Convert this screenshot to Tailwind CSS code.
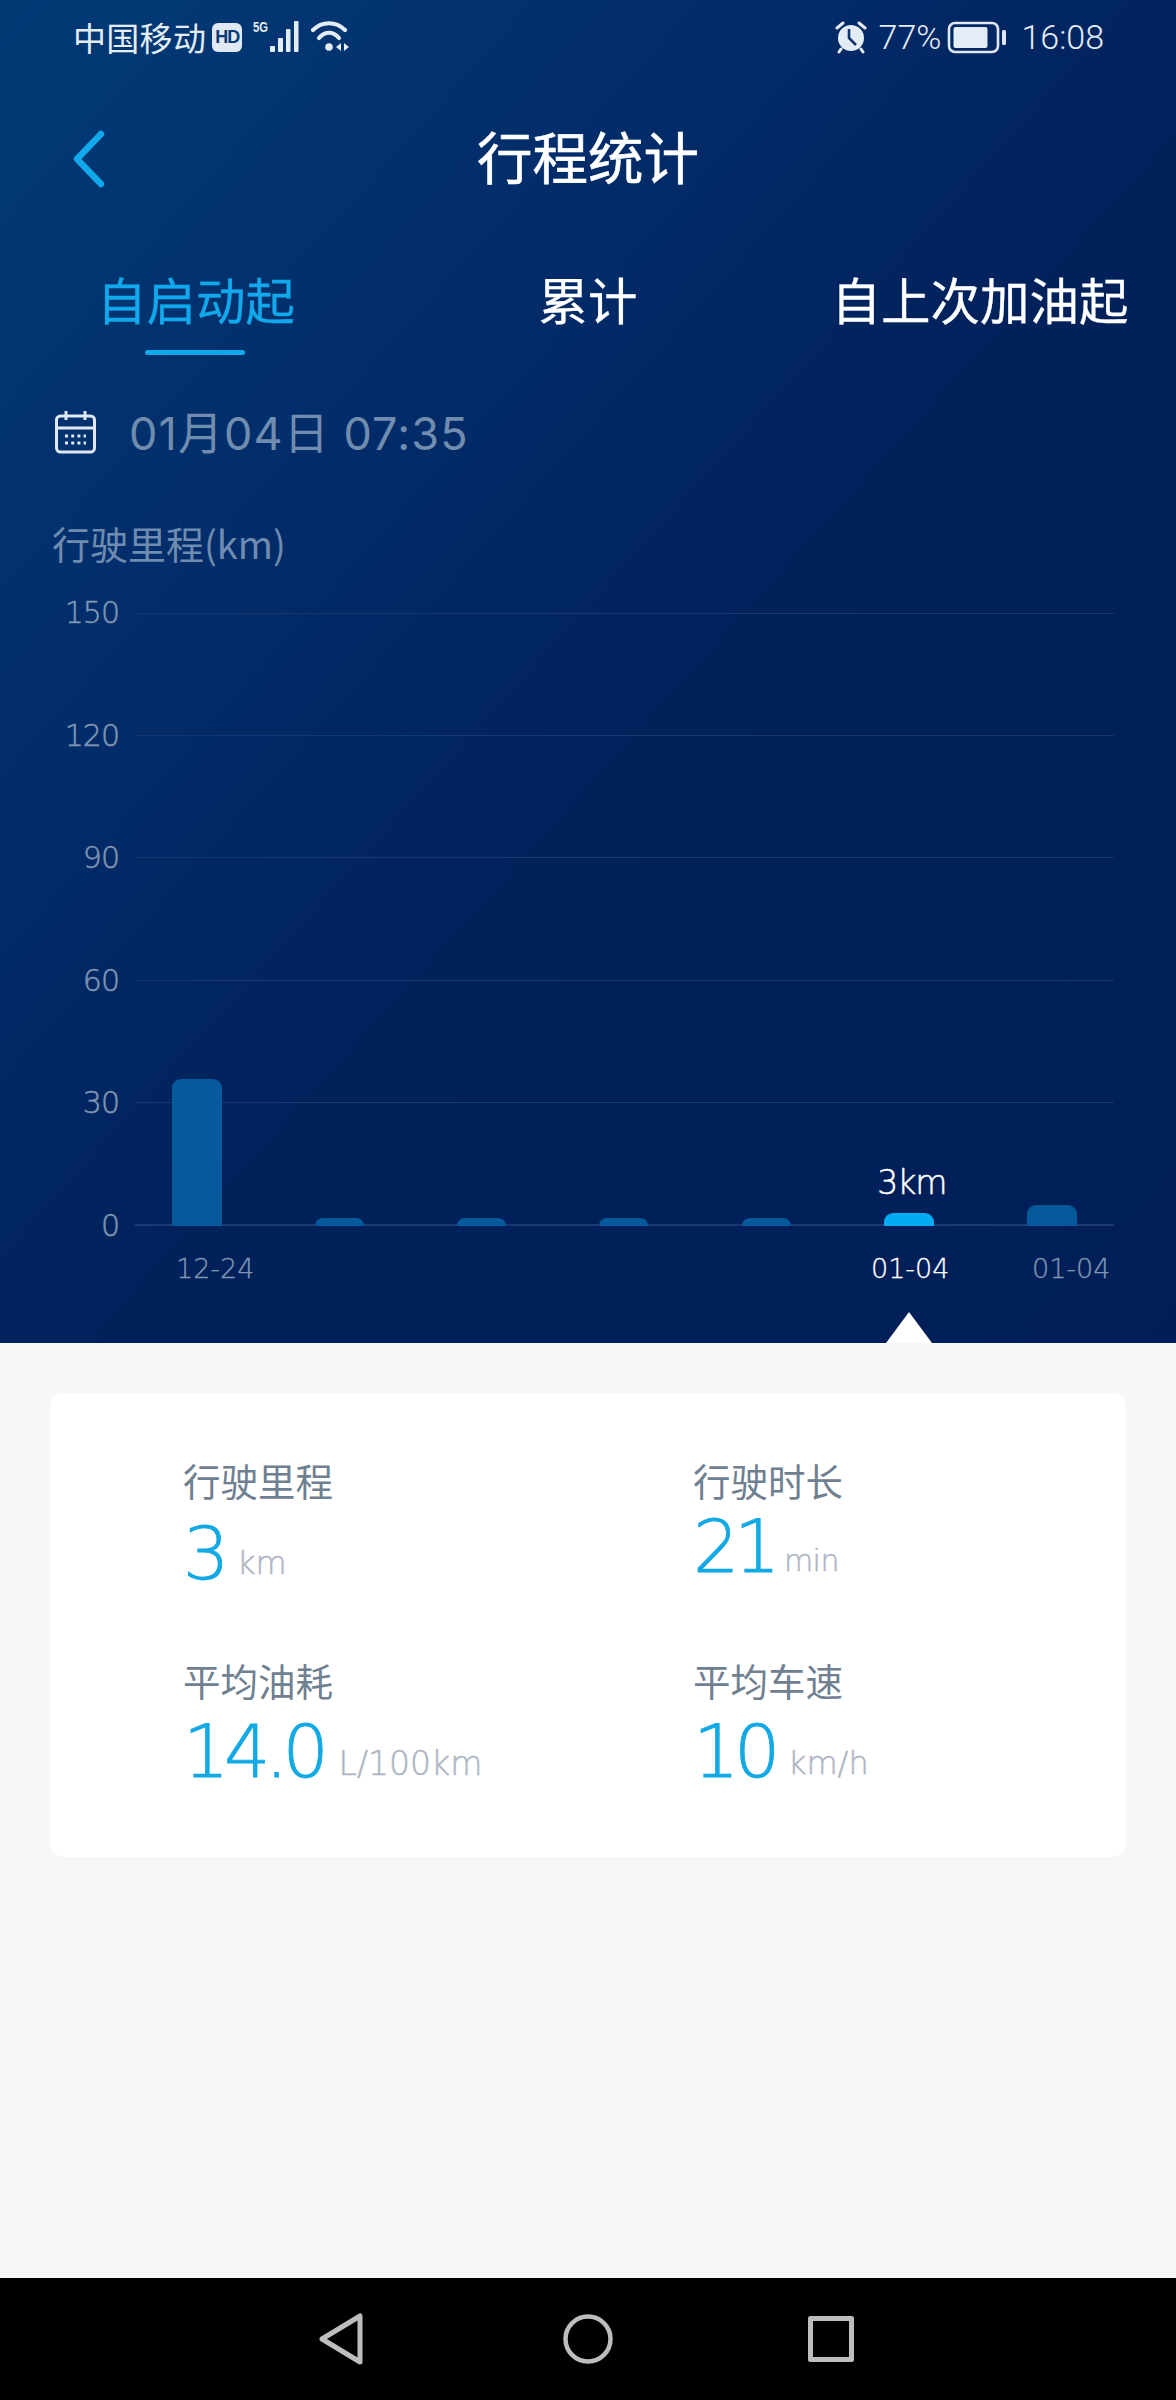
<!DOCTYPE html>
<html lang="zh-CN">
<head>
<meta charset="utf-8">
<script src="https://cdn.jsdelivr.net/npm/@tailwindcss/browser@4"></script>
</head>
<body class="m-0 bg-[#f5f7f9]">
<div class="flex h-[2400px] w-[1176px] flex-col overflow-hidden font-['Noto_Sans_CJK_SC','Noto_Sans',sans-serif]">
  <!-- dark panel -->
  <section class="relative h-[1343px] shrink-0 bg-[linear-gradient(132deg,#013b76_0%,#022d6a_30%,#01215b_55%,#001f58_100%)] text-white">
    <!-- status bar -->
    <div class="flex h-[74px] items-center justify-between pl-[73px] pr-[72px] text-[#e4ecf5]">
      <div class="flex items-center">
        <span class="text-[33px] leading-[44px] tracking-[0.3px]">中国移动</span>
        <span class="ml-[6px] flex h-[29px] w-[30px] items-center justify-center rounded-[6px] bg-[#dfe8f3] font-['Liberation_Sans',sans-serif] text-[18px] font-bold leading-none tracking-[-1px] text-[#0a3a72]">HD</span>
        <svg class="ml-[11px]" width="50" height="34" viewBox="0 0 50 34" fill="#e4ecf5">
          <text x="0" y="12" font-family="Liberation Sans" font-size="14" font-weight="700" textLength="15" lengthAdjust="spacingAndGlyphs">5G</text>
          <rect x="17" y="26" width="5" height="6" rx="1"/><rect x="25" y="18" width="5" height="14" rx="1"/><rect x="33" y="9" width="4.500" height="23" rx="1"/><rect x="41" y="1" width="4.500" height="31" rx="1"/>
        </svg>
        <svg class="ml-[8px]" width="40" height="34" viewBox="0 0 40 34" fill="none" stroke="#e4ecf5" stroke-width="4.200" stroke-linecap="round">
          <path d="M2 10 C 11 1, 25 1, 34 10"/><path d="M8 18 C 14 11, 22 11, 28 18"/>
          <circle cx="18" cy="27" r="3.800" fill="#e4ecf5" stroke="none"/>
          <path d="M25 27 L30 23 V31 Z M33 23 L38 27 L33 31 Z" fill="#e4ecf5" stroke="none"/>
        </svg>
      </div>
      <div class="flex items-center">
        <svg width="34" height="34" viewBox="0 0 34 34">
          <circle cx="17" cy="18" r="13" fill="#e4ecf5"/>
          <path d="M3 8 L9 3 M31 8 L25 3 M7 29 L5 32 M27 29 L29 32" stroke="#e4ecf5" stroke-width="3" stroke-linecap="round"/>
          <path d="M15 9 V18 L22 25" fill="none" stroke="#0c3470" stroke-width="2.6"/>
        </svg>
        <span class="ml-[11px] font-['Roboto',sans-serif] text-[34px] font-light leading-none">77%</span>
        <svg class="ml-[6px]" width="60" height="34" viewBox="0 0 60 34">
          <rect x="2" y="3" width="49" height="29" rx="6" fill="none" stroke="#dfe8f3" stroke-width="2.6"/>
          <rect x="6.500" y="7" width="34" height="21" rx="2" fill="#e4ecf5"/>
          <rect x="55" y="10" width="4" height="15" rx="1.500" fill="#dfe8f3"/>
        </svg>
        <span class="ml-[14px] font-['Roboto',sans-serif] text-[34px] font-light leading-none">16:08</span>
      </div>
    </div>
    <!-- header -->
    <header class="relative flex h-[168px] items-center justify-center pb-[5px]">
      <svg class="absolute left-[71px] top-[56px]" width="36" height="58" viewBox="0 0 36 58" fill="none" stroke="#11a8ec" stroke-width="6.500" stroke-linecap="round" stroke-linejoin="round"><path d="M30 4 L6 29 L30 54"/></svg>
      <h1 class="text-[55.500px] font-normal leading-none [-webkit-text-stroke:0.6px]">行程统计</h1>
    </header>
    <!-- tabs -->
    <nav class="grid h-[113px] grid-cols-3 text-center text-[49.500px] leading-none [-webkit-text-stroke:0.3px]">
      <div class="pt-[32px] text-[#12a8ec]">自启动起<div class="mx-auto mt-[26px] h-[5px] w-[100px] -translate-x-px rounded-full bg-[#12a8ec]"></div></div>
      <div class="pt-[32px]">累计</div>
      <div class="pt-[32px]">自上次加油起</div>
    </nav>
    <!-- date -->
    <div class="mt-[55px] flex h-[46px] items-center pl-[54px]">
      <svg class="-mt-[2px]" width="44" height="46" viewBox="0 0 44 46" fill="none" stroke="#dfe8f3" stroke-width="3">
        <rect x="2.500" y="7" width="38" height="36" rx="4"/>
        <path d="M2.500 19 H40.500 M12 2 V11 M31 2 V11" />
        <path d="M11 27 H32 M11 34 H32" stroke-dasharray="3 3.200" stroke-width="2.800"/>
      </svg>
      <span class="ml-[31px] font-['Inter','Noto_Sans_CJK_SC',sans-serif] text-[45px] leading-none tracking-[1.100px] text-[#708cae]">01月04日 07:35</span>
    </div>
    <!-- chart title -->
    <div class="mt-[65px] pl-[52px] font-['Noto_Sans_CJK_SC',sans-serif] text-[38px] leading-[44px] text-[#6f8cb0]">行驶里程(km)</div>
    <!-- chart -->
    <div class="mt-[48px] flex h-[613px] pl-[62px] pr-[62px]">
      <div class="flex w-[57px] flex-col justify-between font-['DejaVu_Sans',sans-serif] text-[30px] font-extralight tracking-[-1px] text-[#8196b2] [-webkit-text-stroke:0.5px] [&>span]:block [&>span]:h-0 [&>span]:text-right [&>span]:leading-[0]">
        <span>150</span><span>120</span><span>90</span><span>60</span><span>30</span><span>0</span>
      </div>
      <div class="relative ml-[16px] flex-1">
        <div class="absolute inset-0 flex flex-col justify-between [&>div]:h-px [&>div]:bg-[#17376e]">
          <div></div><div></div><div></div><div></div><div></div><div class="!h-[2px] !bg-[#1b3a74]"></div>
        </div>
        <div class="absolute bottom-0 left-[37px] right-[37px] flex items-end justify-between">
          <div class="h-[147px] w-[50px] rounded-t-[9px] bg-[#065a9c]"></div>
          <div class="h-[8px] w-[49px] rounded-t-[9px] bg-[#065a9c]"></div>
          <div class="h-[8px] w-[49px] rounded-t-[9px] bg-[#065a9c]"></div>
          <div class="h-[8px] w-[49px] rounded-t-[9px] bg-[#065a9c]"></div>
          <div class="h-[8px] w-[49px] rounded-t-[9px] bg-[#065a9c]"></div>
          <div class="relative h-[13px] w-[50px] rounded-t-[9px] bg-[#03abf3]">
            <span class="absolute bottom-[23px] left-[calc(50%+3px)] -translate-x-1/2 font-['DejaVu_Sans',sans-serif] text-[33px] font-extralight leading-[40px] tracking-[-1px] text-white [-webkit-text-stroke:0.5px]">3km</span>
          </div>
          <div class="h-[21px] w-[50px] rounded-t-[9px] bg-[#065a9c]"></div>
        </div>
      </div>
    </div>
    <!-- x labels -->
    <div class="relative mt-[25px] h-[36px] font-['DejaVu_Sans',sans-serif] text-[27px] font-extralight leading-[36px] text-[#8196b2] [-webkit-text-stroke:0.3px]">
      <span class="absolute left-[176px]">12-24</span>
      <span class="absolute left-[871px] text-white">01-04</span>
      <span class="absolute left-[1032px]">01-04</span>
    </div>
    <!-- pointer -->
    <div class="absolute bottom-0 left-[886px] h-[31px] w-[46px] bg-white [clip-path:polygon(50%_0,100%_100%,0_100%)]"></div>
  </section>

  <!-- body -->
  <main class="flex-1 bg-[#f5f7f9] px-[50px] pt-[50px]">
    <div class="grid h-[464px] grid-cols-[510px_1fr] content-start rounded-[14px] bg-white pl-[133px] pt-[58px]">
      <div class="h-[200px]">
        <div class="text-[37.500px] leading-[58px] text-[#6f8091]">行驶里程</div>
        <div class="mt-[8px] flex items-baseline font-['DejaVu_Sans',sans-serif] font-extralight"><span class="text-[73px] leading-[74px] tracking-[-5.500px] text-[#12a9e4] [-webkit-text-stroke:0.8px]">3</span><span class="ml-[13px] -translate-y-[5px] text-[32px] text-[#aeb6c4] [-webkit-text-stroke:0.5px]">km</span></div>
      </div>
      <div class="h-[200px]">
        <div class="text-[37.500px] leading-[58px] text-[#6f8091]">行驶时长</div>
        <div class="mt-[1px] flex items-baseline font-['DejaVu_Sans',sans-serif] font-extralight"><span class="text-[73px] leading-[74px] tracking-[-5.500px] text-[#12a9e4] [-webkit-text-stroke:0.8px]">21</span><span class="ml-[9px] -translate-y-[1px] text-[30px] tracking-[-0.5px] text-[#aeb6c4] [-webkit-text-stroke:0.5px]">min</span></div>
      </div>
      <div>
        <div class="text-[37.500px] leading-[58px] text-[#6f8091]">平均油耗</div>
        <div class="mt-[6px] flex items-baseline font-['DejaVu_Sans',sans-serif] font-extralight"><span class="text-[73px] leading-[74px] tracking-[-5.500px] text-[#12a9e4] [-webkit-text-stroke:0.8px]">14.0</span><span class="ml-[15px] -translate-y-[2px] text-[33px] text-[#aeb6c4] [-webkit-text-stroke:0.5px]">L/100km</span></div>
      </div>
      <div>
        <div class="text-[37.500px] leading-[58px] text-[#6f8091]">平均车速</div>
        <div class="mt-[6px] flex items-baseline font-['DejaVu_Sans',sans-serif] font-extralight"><span class="text-[73px] leading-[74px] tracking-[-5.500px] text-[#12a9e4] [-webkit-text-stroke:0.8px]">10</span><span class="ml-[13px] -translate-y-[3px] text-[32px] text-[#aeb6c4] [-webkit-text-stroke:0.5px]">km/h</span></div>
      </div>
    </div>
  </main>

  <!-- system nav -->
  <footer class="flex h-[122px] shrink-0 items-center bg-black">
    <div class="ml-[319px] flex items-center">
      <svg width="46" height="52" viewBox="0 0 46 52" fill="none" stroke="#bdbdbd" stroke-width="5" stroke-linejoin="round"><path d="M41 3 V49 L3 26 Z"/></svg>
      <svg class="ml-[198px]" width="50" height="50" viewBox="0 0 50 50" fill="none" stroke="#bdbdbd" stroke-width="4.500"><circle cx="25" cy="25" r="22.500"/></svg>
      <svg class="ml-[195px]" width="46" height="46" viewBox="0 0 46 46" fill="none" stroke="#bdbdbd" stroke-width="5" stroke-linejoin="round"><rect x="2.500" y="2.500" width="41" height="41"/></svg>
    </div>
  </footer>
</div>
</body>
</html>
